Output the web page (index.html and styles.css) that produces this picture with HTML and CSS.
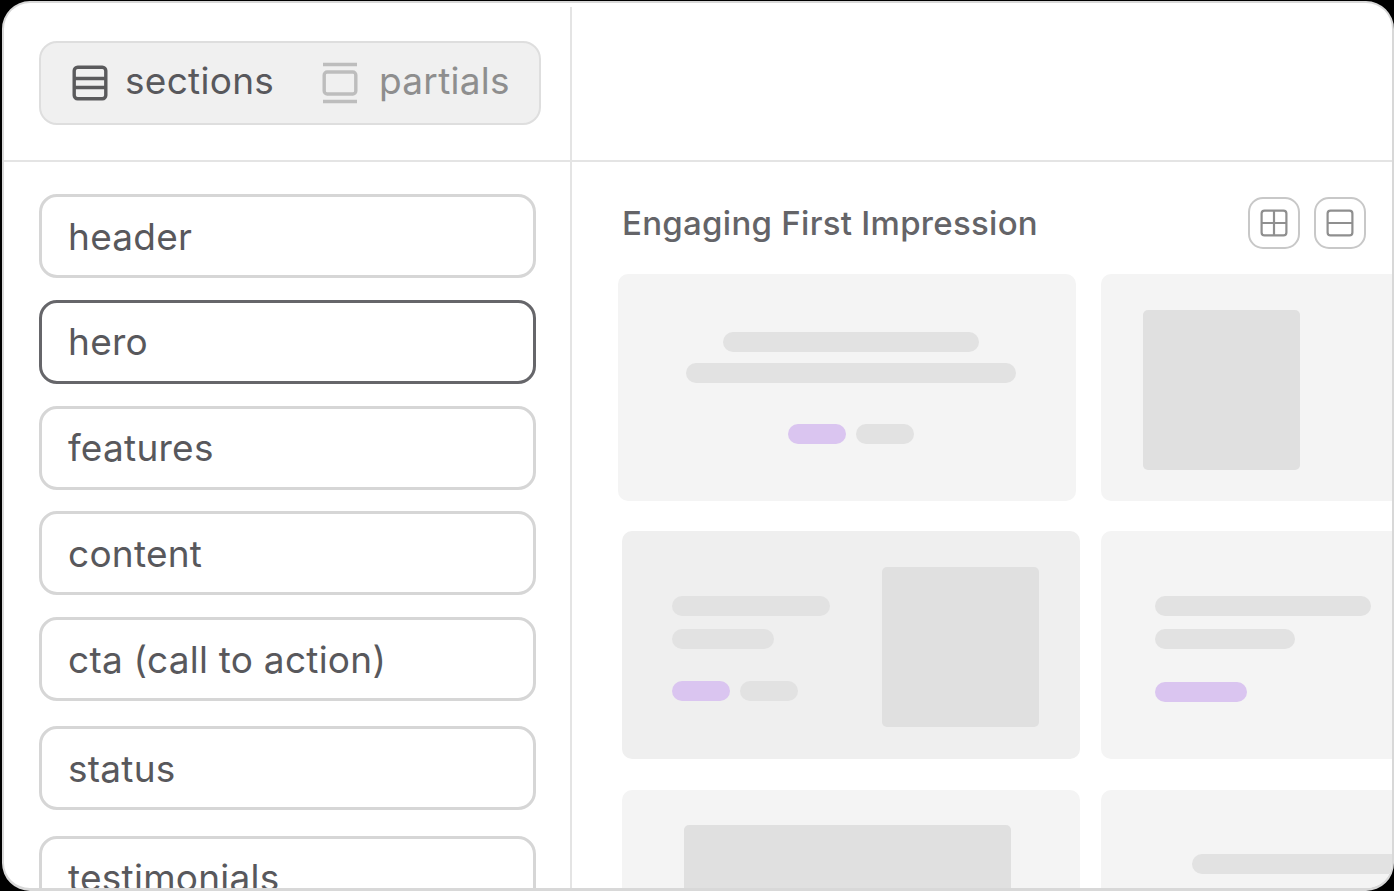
FILE: index.html
```html
<!DOCTYPE html>
<html lang="en">
<head>
    <meta charset="UTF-8">
    <title>Sections</title>
    <link rel="stylesheet" href="styles.css">
</head>
<body>
    <div class="frame">
        <div class="top">
            <div class="topLeft">
                <div class="tabs">
                    <div class="tab tab_active">
                        <svg class="tabIcon" width="38" height="38" viewBox="0 0 38 38" fill="none" stroke="#5a5a5c" stroke-width="3.4">
                            <rect x="3.2" y="3.2" width="31.6" height="31.6" rx="3.5"/>
                            <path d="M3 14.5H35M3 23.5H35"/>
                        </svg>
                        <span>sections</span>
                    </div>
                    <div class="tab tab_muted">
                        <svg class="tabIcon" width="38" height="42" viewBox="0 0 38 42" fill="none" stroke="#bdbdbd" stroke-width="3.4">
                            <path d="M2 2.5H36M2 39.5H36"/>
                            <rect x="3.2" y="10" width="31.6" height="22" rx="3"/>
                        </svg>
                        <span>partials</span>
                    </div>
                </div>
            </div>
            <div class="topRight"></div>
        </div>
        <div class="main">
            <div class="sidebar">
                <div class="item">header</div>
                <div class="item item_selected">hero</div>
                <div class="item">features</div>
                <div class="item">content</div>
                <div class="item">cta (call to action)</div>
                <div class="item item_spaced">status</div>
                <div class="item item_spaced">testimonials</div>
            </div>
            <div class="content">
                <div class="contentHead">
                    <h2 class="contentTitle">Engaging First Impression</h2>
                    <div class="viewBtns">
                        <div class="viewBtn">
                            <svg width="28" height="28" viewBox="0 0 28 28" fill="none" stroke="#8f8f8f" stroke-width="2.2">
                                <rect x="1.6" y="1.6" width="24.8" height="24.8" rx="3"/>
                                <path d="M14 1.5V26.5M1.5 14H26.5"/>
                            </svg>
                        </div>
                        <div class="viewBtn">
                            <svg width="28" height="28" viewBox="0 0 28 28" fill="none" stroke="#8f8f8f" stroke-width="2.2">
                                <rect x="1.6" y="1.6" width="24.8" height="24.8" rx="3"/>
                                <path d="M1.5 14H26.5"/>
                            </svg>
                        </div>
                    </div>
                </div>

                <div class="cardRow cardRow_first">
                    <div class="card card_wide card_centered">
                        <div class="bar bar_a"></div>
                        <div class="bar bar_b"></div>
                        <div class="pills">
                            <div class="pill pill_purple"></div>
                            <div class="pill"></div>
                        </div>
                    </div>
                    <div class="card card_narrow card_image">
                        <div class="block"></div>
                    </div>
                </div>

                <div class="cardRow cardRow_second">
                    <div class="card card_wide card_split">
                        <div class="splitText">
                            <div class="bar bar_c"></div>
                            <div class="bar bar_d"></div>
                            <div class="pills pills_left">
                                <div class="pill pill_purple"></div>
                                <div class="pill"></div>
                            </div>
                        </div>
                        <div class="block"></div>
                    </div>
                    <div class="card card_narrow card_text">
                        <div class="bar bar_e"></div>
                        <div class="bar bar_f"></div>
                        <div class="pill pill_purple pill_long"></div>
                    </div>
                </div>

                <div class="cardRow cardRow_third">
                    <div class="card card_wide card_plain">
                        <div class="block block_wide"></div>
                    </div>
                    <div class="card card_narrow card_last">
                        <div class="bar bar_g"></div>
                    </div>
                </div>
            </div>
        </div>
    </div>
</body>
</html>
```

FILE: styles.css
```css
* {
    box-sizing: border-box;
}

body {
    margin: 0;
    height: 891px;
    overflow: hidden;
    background-color: #000000;
    font-family: "Inter", "Liberation Sans", sans-serif;
    color: #58585c;
}

.frame {
    margin: 1px 0 0 2px;
    height: 890px;
    background-color: #ffffff;
    border: 2px solid #d8d8d8;
    border-bottom-width: 3px;
    border-radius: 28px;
    overflow: hidden;
}

/* top bar */
.top {
    display: flex;
    height: 159px;
    border-bottom: 2px solid #e4e4e4;
}

.topLeft {
    width: 566px;
    padding: 38px 0 0 35px;
}

.topRight {
    flex: 1;
    margin-top: 4px;
    border-left: 2px solid #e4e4e4;
}

.tabs {
    display: flex;
    align-items: center;
    width: 502px;
    height: 84px;
    padding-left: 30px;
    background-color: #f0f0f0;
    border: 2px solid #dedede;
    border-radius: 18px;
}

.tab {
    display: flex;
    align-items: center;
    font-size: 37px;
    letter-spacing: 0.28px;
}

.tab span {
    margin-bottom: 6px;
}

.tabIcon {
    flex: none;
    margin-right: 16px;
}

.tab_active {
    width: 250px;
}

.tab_muted {
    color: #8e8e8e;
}

.tab_muted .tabIcon {
    margin-right: 20px;
}

/* main area */
.main {
    display: flex;
    height: 728px;
}

.sidebar {
    flex: none;
    width: 566px;
    padding: 32px 0 0 35px;
}

.item {
    display: flex;
    align-items: center;
    width: 497px;
    height: 84px;
    margin-bottom: 21.75px;
    padding-left: 26px;
    font-size: 37px;
    letter-spacing: 0.25px;
    background-color: #ffffff;
    border: 3px solid #d6d6d6;
    border-radius: 18px;
}

.item_selected {
    border-color: #66666a;
}

.item_spaced {
    margin-top: 25.25px;
}

.content {
    flex: 1;
    min-width: 0;
    overflow: hidden;
    border-left: 2px solid #e4e4e4;
}

.contentHead {
    display: flex;
    justify-content: space-between;
    height: 112px;
    padding: 35px 26px 0 50px;
}

.contentTitle {
    margin: 0;
    padding-top: 6px;
    font-size: 33px;
    font-weight: 500;
    letter-spacing: 0.28px;
    line-height: 40px;
    color: #646468;
}

.viewBtns {
    display: flex;
    gap: 14px;
}

.viewBtn {
    display: flex;
    align-items: center;
    justify-content: center;
    width: 52px;
    height: 52px;
    border: 2px solid #c8c8c8;
    border-radius: 15px;
}

/* cards */
.cardRow {
    display: flex;
    height: 227px;
}

.cardRow_first {
    padding-left: 46px;
    gap: 25px;
}

.cardRow_second,
.cardRow_third {
    padding-left: 50px;
    gap: 21px;
}

.cardRow_second {
    margin-top: 30px;
    height: 228px;
}

.cardRow_third {
    margin-top: 31px;
    height: 110px;
}

.card {
    flex: none;
    height: 100%;
    background-color: #f4f4f4;
    border-radius: 10px;
}

.card_wide {
    width: 458px;
}

.card_narrow {
    width: 320px;
}

.card_centered {
    display: flex;
    flex-direction: column;
    align-items: center;
    padding: 58px 0 0 8px;
}

.card_image {
    padding: 36px 0 0 42px;
}

.card_split {
    display: flex;
    justify-content: space-between;
    padding: 36px 41px 0 50px;
    background-color: #efefef;
}

.splitText {
    padding-top: 29px;
}

.card_text {
    padding: 65px 0 0 54px;
}

.card_plain {
    padding: 35px 0 0 62px;
}

.card_last {
    padding: 64px 0 0 91px;
}

.bar,
.pill {
    height: 20px;
    background-color: #e2e2e2;
    border-radius: 10px;
}

.bar_a { width: 256px; }
.bar_b { width: 330px; margin-top: 11px; }
.bar_c { width: 158px; }
.bar_d { width: 102px; margin-top: 13px; }
.bar_e { width: 216px; }
.bar_f { width: 140px; margin-top: 13px; }
.bar_g { width: 260px; }

.pills {
    display: flex;
    gap: 10px;
    margin-top: 41px;
}

.pills_left {
    margin-top: 32px;
}

.pill {
    width: 58px;
}

.pill_purple {
    background-color: #dac5f0;
}

.pill_long {
    width: 92px;
    margin-top: 33px;
}

.block {
    width: 157px;
    height: 160px;
    background-color: #e0e0e0;
    border-radius: 5px;
}

.block_wide {
    width: 327px;
    height: 100px;
}
```
